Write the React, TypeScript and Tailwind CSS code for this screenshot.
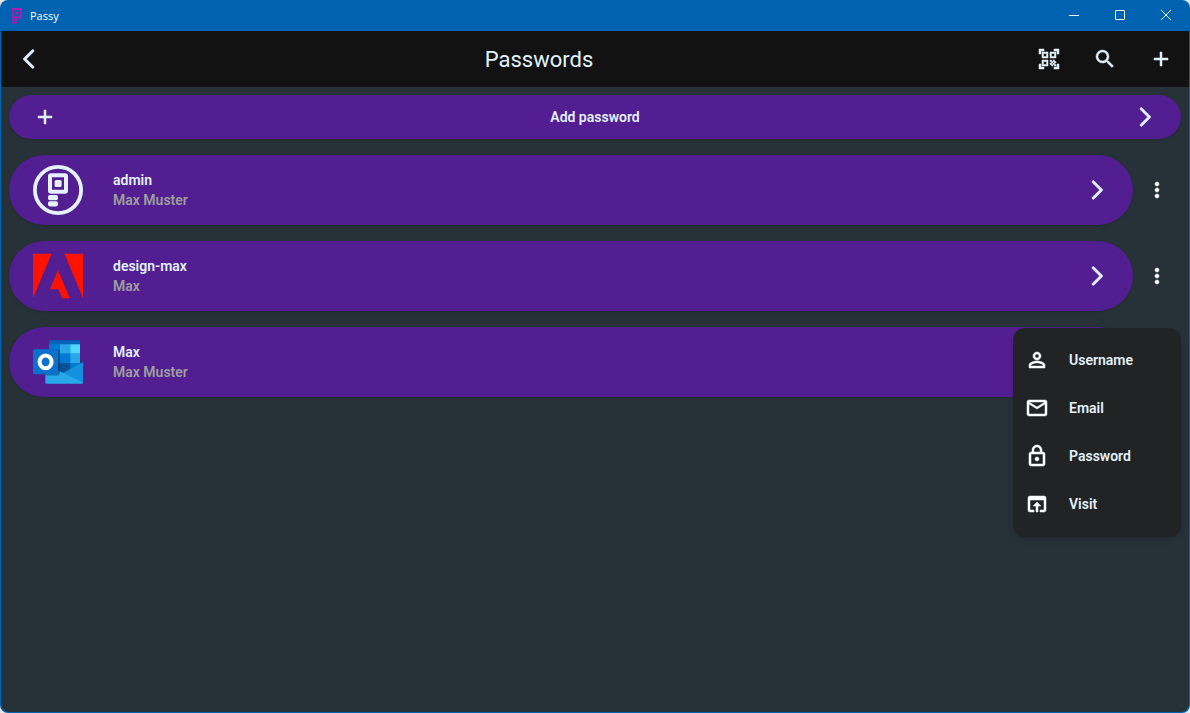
import type { ReactNode } from "react";
import {
  MdAdd,
  MdLockOutline,
  MdMailOutline,
  MdMoreVert,
  MdOpenInBrowser,
  MdPersonOutline,
  MdQrCodeScanner,
  MdSearch,
} from "react-icons/md";

const iconClass = "size-6 shrink-0 stroke-current [stroke-width:0.5] [&>path[fill=none]]:hidden";

function ChevronRight() {
  return (
    <svg viewBox="0 0 24 24" className={iconClass} fill="currentColor" aria-hidden="true">
      <path d="M7.38 21.01c.49.49 1.28.49 1.77 0l8.31-8.31c.39-.39.39-1.02 0-1.41L9.15 2.98c-.49-.49-1.28-.49-1.77 0s-.49 1.28 0 1.77L14.62 12l-7.25 7.25c-.48.48-.48 1.28.01 1.76z" />
    </svg>
  );
}

function ChevronLeft() {
  return (
    <svg viewBox="0 0 24 24" className={iconClass} fill="currentColor" aria-hidden="true">
      <path d="M16.62 2.99c-.49-.49-1.28-.49-1.77 0L6.54 11.3c-.39.39-.39 1.02 0 1.41l8.31 8.31c.49.49 1.28.49 1.77 0s.49-1.28 0-1.77L9.38 12l7.25-7.25c.48-.48.48-1.28-.01-1.76z" />
    </svg>
  );
}

function AppIcon() {
  return (
    <svg viewBox="0 0 12 16" className="h-4 w-3" aria-hidden="true">
      <path d="M3 1h8v8.500H3z" fill="none" stroke="#b01bb0" strokeWidth="2" />
      <path d="M5.600 3.800h2.800v2.800H5.600zM2 11h5v1.800H2zM2 13.800h5v1.800H2z" fill="#b01bb0" />
    </svg>
  );
}

function PassyLogo() {
  return (
    <svg viewBox="0 0 50 50" className="size-full" aria-hidden="true">
      <circle cx="25" cy="25" r="23.1" fill="none" stroke="#e3f2fd" strokeWidth="3.8" />
      <rect x="17" y="10.2" width="16" height="16.6" rx="1" fill="none" stroke="#e3f2fd" strokeWidth="4" />
      <rect x="21.6" y="15" width="7" height="7" rx="1.5" fill="#e3f2fd" />
      <rect x="15" y="30" width="10" height="5.2" rx="1.8" fill="#e3f2fd" />
      <rect x="15" y="36.2" width="10" height="5.2" rx="1.8" fill="#e3f2fd" />
    </svg>
  );
}

function AdobeLogo() {
  return (
    <svg viewBox="0 0 24 24" className="size-full" fill="#ff1300" aria-hidden="true">
      <path d="M13.966 22.624l-1.69-4.281H8.122l3.892-9.144 5.662 13.425zM8.884 1.376H0v21.248zm15.116 0h-8.884L24 22.624Z" />
    </svg>
  );
}

function OutlookLogo() {
  return (
    <svg viewBox="0 0 50 50" className="size-full" aria-hidden="true">
      <path d="M47 23l3 2-4 6z" fill="#123b6d" />
      <path d="M16 4.500A1.200 1.200 0 0 1 17.200 3.300h28.600A1.200 1.200 0 0 1 47 4.500V32L32 40 16 34z" fill="#0364b8" />
      <path d="M16 7.300h11v9.400H16z" fill="#0078d4" />
      <path d="M27 7.300h10.300v9.400H27z" fill="#28a8ea" />
      <path d="M37.300 7.300H47v9.400h-9.700z" fill="#50d9ff" />
      <path d="M27 16.700h10.300v9.600H27z" fill="#0078d4" />
      <path d="M37.300 16.700H47v9.600h-9.700z" fill="#28a8ea" />
      <path d="M16 26.300h21.300V36H16z" fill="#0b4f94" />
      <path d="M37.300 26.300H47V30l-9.700 6z" fill="#0078d4" />
      <path d="M50 25v20.500a1.200 1.200 0 0 1-1.200 1.200L28 37z" fill="#1490df" />
      <path d="M12.300 30v15.500a1.200 1.200 0 0 0 1.200 1.200h35.300a1.200 1.200 0 0 0 1.100-1.200L24 33z" fill="#28a8ea" />
      <path d="M16 12.500h9.500a1.500 1.500 0 0 1 1.500 1.500v21.500a3 3 0 0 1-3 3H12.300V36L16 30z" fill="#06335f" opacity=".45" />
      <rect x="0" y="12.300" width="25" height="25" rx="1.200" fill="#0a72cc" />
      <ellipse cx="12.600" cy="24.900" rx="6" ry="6.400" fill="none" stroke="#fff" strokeWidth="4" />
    </svg>
  );
}

const entries = [
  { title: "admin", detail: "Max Muster", logo: <PassyLogo /> },
  { title: "design-max", detail: "Max", logo: <AdobeLogo /> },
  { title: "Max", detail: "Max Muster", logo: <OutlookLogo /> },
];

const menuItems = [
  { label: "Username", icon: <MdPersonOutline className={iconClass} /> },
  { label: "Email", icon: <MdMailOutline className={iconClass} /> },
  { label: "Password", icon: <MdLockOutline className={iconClass} /> },
  { label: "Visit", icon: <MdOpenInBrowser className={iconClass} /> },
];

function WindowButton({ label, children }: { label: string; children: ReactNode }) {
  return (
    <button type="button" aria-label={label} className="flex w-[46px] items-center justify-center pb-px">
      <svg viewBox="0 0 10 10" className="size-2.5 overflow-visible" fill="none" stroke="#fff" aria-hidden="true">
        {children}
      </svg>
    </button>
  );
}

function BarButton({ label, children }: { label: string; children: ReactNode }) {
  return (
    <button type="button" aria-label={label} className="flex size-14 shrink-0 items-center justify-center">
      {children}
    </button>
  );
}

function EntryMenu() {
  return (
    <div
      role="menu"
      className="absolute top-px right-0 z-10 flex w-[168px] flex-col rounded-xl bg-[#212324] pt-2 pb-[9px] shadow-md"
    >
      {menuItems.map((item) => (
        <button
          key={item.label}
          type="button"
          role="menuitem"
          className="flex h-12 items-center gap-5 px-3 text-left"
        >
          <span className="text-white">{item.icon}</span>
          {item.label}
        </button>
      ))}
    </div>
  );
}

export default function App() {
  return (
    <div className="min-h-screen bg-[#e6e6e6] font-['Roboto',sans-serif] text-sm font-semibold text-[#e3f2fd]">
      <div className="flex min-h-screen flex-col overflow-hidden rounded-lg bg-[#0063b1] px-px pb-px">
        <div className="flex h-[31px] shrink-0 items-stretch">
          <div className="flex flex-1 items-center gap-2 pl-[9px] font-['Open_Sans',sans-serif] text-[11px] font-normal text-white">
            <AppIcon />
            Passy
          </div>
          <WindowButton label="Minimize">
            <path d="M0 5.500h10" />
          </WindowButton>
          <WindowButton label="Maximize">
            <rect x=".5" y=".5" width="9" height="9" rx=".5" />
          </WindowButton>
          <WindowButton label="Close">
            <path d="M0 0l10 10M10 0L0 10" />
          </WindowButton>
        </div>

        <header className="flex h-14 shrink-0 items-center bg-[#121212]">
          <BarButton label="Back">
            <ChevronLeft />
          </BarButton>
          <h1 className="flex-1 text-center text-[22px] leading-[29px] font-normal">Passwords</h1>
          <BarButton label="Scan QR code">
            <MdQrCodeScanner className={iconClass} />
          </BarButton>
          <BarButton label="Search">
            <MdSearch className={iconClass} />
          </BarButton>
          <BarButton label="Add">
            <MdAdd className={iconClass} />
          </BarButton>
        </header>

        <main className="flex flex-1 flex-col gap-4 rounded-b-lg bg-[#263238] p-2">
          <button
            type="button"
            className="flex h-11 items-center rounded-full bg-[#521e91] px-6 shadow-sm"
          >
            <MdAdd className={iconClass} />
            <span className="flex-1 text-center">Add password</span>
            <ChevronRight />
          </button>

          {entries.map((entry, index) => (
            <div key={entry.title} className="relative flex items-center">
              <button
                type="button"
                className="flex h-[70px] flex-1 items-center rounded-full bg-[#521e91] px-6 text-left shadow-sm"
              >
                <span className="size-[50px] shrink-0">{entry.logo}</span>
                <span className="flex flex-1 flex-col pl-[30px] leading-5">
                  <span>{entry.title}</span>
                  <span className="text-[#9e9e9e]">{entry.detail}</span>
                </span>
                <ChevronRight />
              </button>
              <button
                type="button"
                aria-label="More options"
                className="flex size-12 shrink-0 items-center justify-center text-white"
              >
                <MdMoreVert className={iconClass} />
              </button>
              {index === entries.length - 1 && <EntryMenu />}
            </div>
          ))}
        </main>
      </div>
    </div>
  );
}
